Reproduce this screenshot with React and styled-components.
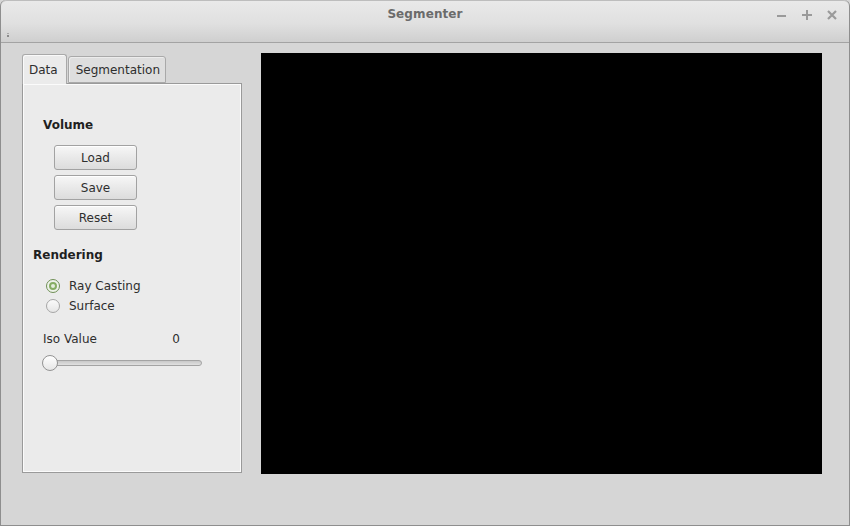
import React, { useState } from 'react';
import styled, { createGlobalStyle } from 'styled-components';

const GlobalStyle = createGlobalStyle`
    html, body {
        margin: 0;
        padding: 0;
        background: #d6d6d6;
    }
    body {
        font-family: "DejaVu Sans", "Liberation Sans", sans-serif;
        font-size: 12px;
        color: #2e2e2e;
    }
`;

const Window = styled.div`
    width: 850px;
    height: 526px;
    box-sizing: border-box;
    border: 1px solid #8e8e8e;
    border-top: none;
    border-radius: 6px 6px 0 0;
    background: #d6d6d6;
    display: flex;
    flex-direction: column;
    overflow: hidden;
`;

const TitleBar = styled.div`
    height: 43px;
    box-sizing: border-box;
    border-bottom: 1px solid #a3a3a3;
    border-top: 1px solid #bdbdbd;
    background: linear-gradient(#e9e9e9, #e0e0e0 55%, #cfcfcf);
    border-radius: 6px 6px 0 0;
    position: relative;
    display: flex;
    justify-content: center;
`;

const Title = styled.div`
    margin-top: 6px;
    font-weight: bold;
    font-size: 12px;
    color: #6b6b6b;
    letter-spacing: 0.1px;
`;

const Controls = styled.div`
    position: absolute;
    right: 9px;
    top: 6px;
    display: flex;
    gap: 9px;
`;

const Ctrl = styled.div`
    width: 16px;
    height: 16px;
    display: flex;
    align-items: center;
    justify-content: center;
`;

const Grip = styled.div`
    position: absolute;
    left: 6px;
    top: 32px;
    width: 2px;
    height: 4px;
    border-top: 1px solid #a8a8a8;
    border-bottom: 2px solid #8a8a8a;
    box-sizing: border-box;
`;

const Content = styled.div`
    flex: 1;
    display: flex;
    align-items: flex-start;
    padding: 10px 0 0 21px;
    gap: 19px;
`;

const TabWidget = styled.div`
    width: 220px;
    display: flex;
    flex-direction: column;
`;

const TabRow = styled.div`
    display: flex;
    align-items: flex-end;
    gap: 1px;
    height: 30px;
    position: relative;
    z-index: 1;
`;

const Tab = styled.div`
    box-sizing: border-box;
    height: ${p => (p.$active ? 30 : 27)}px;
    padding: ${p => (p.$active ? '8px 8px 0 6px' : '6px 5px 0 7px')};
    border: 1px solid #a9a9a9;
    border-bottom: ${p => (p.$active ? 'none' : '1px solid #a9a9a9')};
    border-radius: 3px 3px 0 0;
    background: ${p => (p.$active ? '#ebebeb' : '#dedede')};
    box-shadow: ${p => (p.$active ? 'inset 1px 1px 0 #fafafa' : 'inset 1px 1px 0 #ececec')};
    color: #2e2e2e;
    margin-bottom: ${p => (p.$active ? -1 : 0)}px;
`;

const Panel = styled.div`
    height: 390px;
    box-sizing: border-box;
    border: 1px solid #9a9a9a;
    box-shadow: inset 1px 1px 0 #fbfbfb, inset -1px -1px 0 #fbfbfb;
    background: #ebebeb;
    padding: 34px 0 0 10px;
`;

const Heading = styled.div`
    font-weight: bold;
    font-size: 12px;
    color: #1f1f1f;
    margin-left: ${p => p.$indent || 0}px;
    height: 15px;
`;

const ButtonCol = styled.div`
    display: flex;
    flex-direction: column;
    gap: 5px;
    margin: 12px 0 18px 21px;
`;

const PushButton = styled.button`
    width: 83px;
    height: 25px;
    box-sizing: border-box;
    border: 1px solid #a2a2a2;
    border-radius: 3px;
    background: linear-gradient(#f7f7f7, #e9e9e9 50%, #dcdcdc);
    box-shadow: inset 0 1px 0 #ffffff;
    font-family: "DejaVu Sans", "Liberation Sans", sans-serif;
    font-size: 12px;
    color: #2e2e2e;
    padding: 0;
`;

const RadioGroup = styled.div`
    display: flex;
    flex-direction: column;
    gap: 6px;
    margin: 16px 0 0 13px;
`;

const RadioRow = styled.label`
    display: flex;
    align-items: center;
    gap: 9px;
    height: 14px;
    color: #2e2e2e;
`;

const RadioDot = styled.span`
    width: 14px;
    height: 14px;
    box-sizing: border-box;
    border-radius: 50%;
    border: 1px solid ${p => (p.$on ? '#6f8f55' : '#a6a6a6')};
    background: ${p => (p.$on ? '#eef2ea' : 'linear-gradient(#fafafa, #e6e6e6)')};
    display: flex;
    align-items: center;
    justify-content: center;
    &::after {
        content: '';
        width: 4px;
        height: 4px;
        border-radius: 50%;
        border: 2px solid #86ad63;
        background: #e4eddc;
        display: ${p => (p.$on ? 'block' : 'none')};
    }
`;

const IsoRow = styled.div`
    display: flex;
    justify-content: space-between;
    width: 137px;
    margin: 19px 0 0 10px;
    color: #2e2e2e;
`;

const SliderBox = styled.div`
    position: relative;
    width: 160px;
    height: 18px;
    margin: 8px 0 0 9px;
    display: flex;
    align-items: center;
`;

const Track = styled.div`
    width: 157px;
    height: 4px;
    margin-left: 1px;
    border: 1px solid #a3a3a3;
    border-radius: 3px;
    background: linear-gradient(#c8c8c8, #e0e0e0);
`;

const Knob = styled.div`
    position: absolute;
    left: 0;
    top: 1px;
    width: 16px;
    height: 16px;
    box-sizing: border-box;
    border-radius: 50%;
    border: 1px solid #939393;
    background: linear-gradient(#ffffff, #e6e6e6);
`;

const Viewport = styled.div`
    width: 561px;
    height: 421px;
    background: #000;
`;

export default function App() {
    const [mode, setMode] = useState('ray');

    return (
        <>
            <GlobalStyle />
            <Window>
                <TitleBar>
                    <Title>Segmenter</Title>
                    <Grip />
                    <Controls>
                        <Ctrl>
                            <svg width="12" height="12" viewBox="0 0 12 12">
                                <rect x="1" y="6" width="9" height="2" fill="#9a9a9a" />
                            </svg>
                        </Ctrl>
                        <Ctrl>
                            <svg width="12" height="12" viewBox="0 0 12 12">
                                <rect x="1" y="5" width="10" height="2" fill="#9a9a9a" />
                                <rect x="5" y="1" width="2" height="10" fill="#9a9a9a" />
                            </svg>
                        </Ctrl>
                        <Ctrl>
                            <svg width="12" height="12" viewBox="0 0 12 12">
                                <path d="M2 2 L10 10 M10 2 L2 10" stroke="#9a9a9a" strokeWidth="2.2" />
                            </svg>
                        </Ctrl>
                    </Controls>
                </TitleBar>
                <Content>
                    <TabWidget>
                        <TabRow>
                            <Tab $active>Data</Tab>
                            <Tab>Segmentation</Tab>
                        </TabRow>
                        <Panel>
                            <Heading $indent={10}>Volume</Heading>
                            <ButtonCol>
                                <PushButton>Load</PushButton>
                                <PushButton>Save</PushButton>
                                <PushButton>Reset</PushButton>
                            </ButtonCol>
                            <Heading>Rendering</Heading>
                            <RadioGroup>
                                <RadioRow onClick={() => setMode('ray')}>
                                    <RadioDot $on={mode === 'ray'} />
                                    Ray Casting
                                </RadioRow>
                                <RadioRow onClick={() => setMode('surface')}>
                                    <RadioDot $on={mode === 'surface'} />
                                    Surface
                                </RadioRow>
                            </RadioGroup>
                            <IsoRow>
                                <span>Iso Value</span>
                                <span>0</span>
                            </IsoRow>
                            <SliderBox>
                                <Track />
                                <Knob />
                            </SliderBox>
                        </Panel>
                    </TabWidget>
                    <Viewport />
                </Content>
            </Window>
        </>
    );
}
